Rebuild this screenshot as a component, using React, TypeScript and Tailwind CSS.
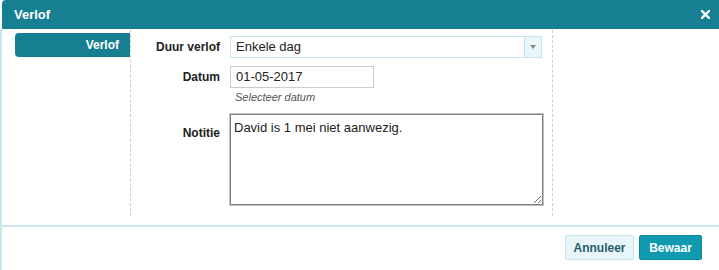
import React from "react";

function CloseIcon() {
  return (
    <svg width="9" height="9" viewBox="0 0 9 9">
      <path d="M1 1L8 8M8 1L1 8" stroke="#fff" strokeWidth="2.4" strokeLinecap="square" />
    </svg>
  );
}

export default function App() {
  return (
    <div
      className="w-[719px] h-[270px] bg-white flex flex-col text-[#333]"
      style={{ fontFamily: '"Liberation Sans", Arial, sans-serif' }}
    >
      <div className="h-[29px] ml-[2px] bg-[#177f92] rounded-tl-[4px] flex items-center justify-between pl-[12px] pr-[9px]">
        <span className="text-white font-bold text-[13px]">Verlof</span>
        <CloseIcon />
      </div>

      <div className="flex-1 flex flex-col border-l-2 border-[#c4e8ee]">
        <div className="flex h-[186px] mt-[1px]">
          <div className="w-[129px] pl-[13px] pt-[3px] border-r border-dashed border-[#cfcfcf]">
            <div className="h-[24px] bg-[#177f92] rounded-l-[4px] flex items-center justify-end pr-[11px] text-white font-bold text-[12px]">
              Verlof
            </div>
          </div>

          <div className="w-[422px] border-r border-dashed border-[#cfcfcf] pt-[6px] flex flex-col">
            <div className="flex items-center h-[22px]">
              <label className="w-[89px] text-right font-bold text-[12px] text-[#222]">Duur verlof</label>
              <div className="ml-[10px] w-[312px] h-[22px] border border-[#c4e6ec] flex">
                <div className="flex-1 flex items-center pl-[5px] text-[13px] text-[#222]">Enkele dag</div>
                <div className="w-[17px] bg-[#e9f5f8] border-l border-[#c4e6ec] flex items-center justify-center">
                  <svg width="6" height="4" viewBox="0 0 6 4">
                    <path d="M0 0H6L3 4Z" fill="#8a8a8a" />
                  </svg>
                </div>
              </div>
            </div>

            <div className="flex items-center h-[22px] mt-[8px]">
              <label className="w-[89px] text-right font-bold text-[12px] text-[#222]">Datum</label>
              <div className="ml-[10px] w-[144px] h-[22px] border border-[#cccccc] flex items-center pl-[5px] text-[13px] text-[#222]">
                01-05-2017
              </div>
            </div>
            <div className="ml-[104px] mt-[1px] text-[11px] italic text-[#555]">Selecteer datum</div>

            <div className="flex items-start mt-[8px]">
              <label className="w-[89px] text-right font-bold text-[12px] text-[#222] pt-[10px]">Notitie</label>
              <textarea
                readOnly
                defaultValue="David is 1 mei niet aanwezig."
                className="ml-[10px] w-[313px] h-[91px] border border-[#7f7f7f] shadow-[0_0_0_1px_#c2c2c2] px-[3px] py-[5px] text-[13px] text-[#222] leading-[15px] outline-none resize"
                style={{ fontFamily: '"Liberation Sans", Arial, sans-serif' }}
              />
            </div>
          </div>
        </div>

        <div className="mt-[9px] border-t-2 border-[#c9e7ec] flex justify-end gap-[5px] pr-[17px] pt-[8px]">
          <button className="w-[69px] h-[25px] bg-[#e8f5f9] border border-[#c4e6ec] rounded-[2px] text-[12px] font-bold text-[#2a5d6b]">
            Annuleer
          </button>
          <button className="w-[63px] h-[25px] bg-[#0f9ab0] border border-[#0c8a9e] rounded-[2px] text-[12px] font-bold text-white">
            Bewaar
          </button>
        </div>
      </div>
    </div>
  );
}
